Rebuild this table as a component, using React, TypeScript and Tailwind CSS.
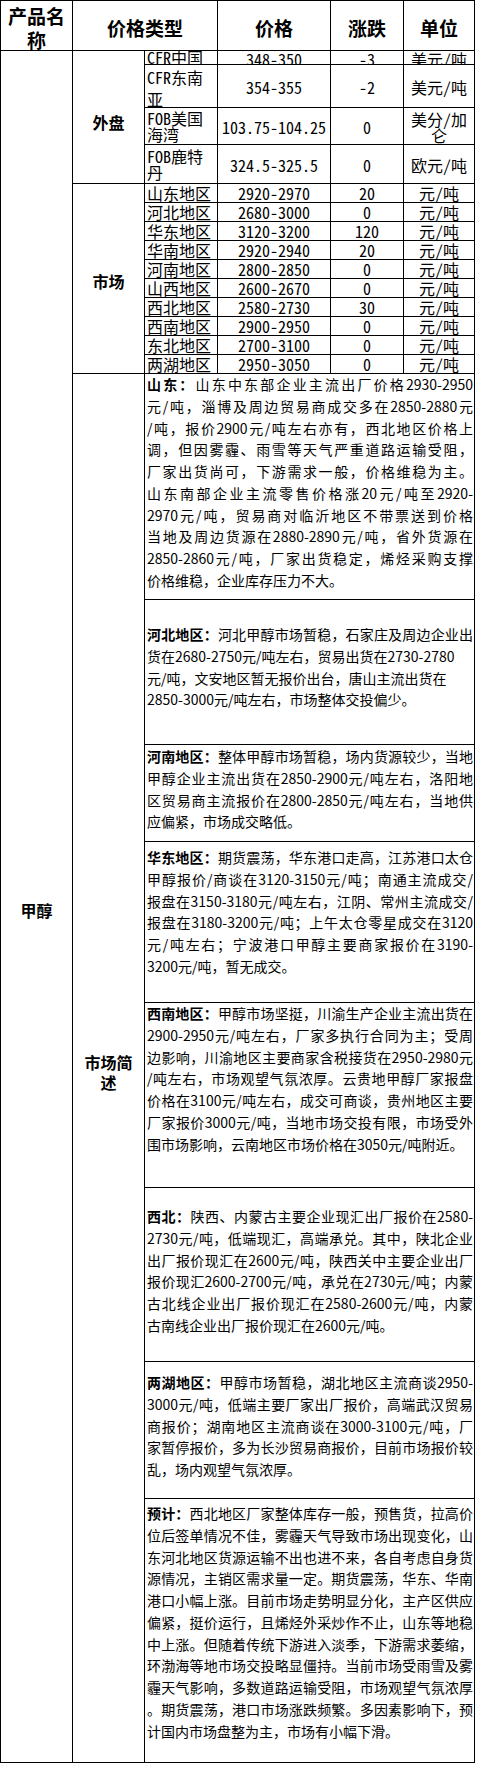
import React from 'react'

const cellFont = "font-['Noto_Sans_Mono_CJK_SC','Noto_Sans_CJK_SC',sans-serif]"

type OuterRow = { name: string[]; price: string; change: string; unit: string[]; pad: string }

const outerRows: OuterRow[] = [
  { name: ['CFR中国'], price: '348-350', change: '-3', unit: ['美元/吨'], pad: 'leading-[13px]' },
  { name: ['CFR东南', '亚'], price: '354-355', change: '-2', unit: ['美元/吨'], pad: 'pt-[4px] leading-[16px] justify-between' },
  { name: ['FOB美国', '海湾'], price: '103.75-104.25', change: '0', unit: ['美分/加', '仑'], pad: 'pt-[2px] leading-[16px]' },
  { name: ['FOB鹿特', '丹'], price: '324.5-325.5', change: '0', unit: ['欧元/吨'], pad: 'pt-[3px] leading-[16px]' },
]

const marketRows = [
  ['山东地区', '2920-2970', '20'],
  ['河北地区', '2680-3000', '0'],
  ['华东地区', '3120-3200', '120'],
  ['华南地区', '2920-2940', '20'],
  ['河南地区', '2800-2850', '0'],
  ['山西地区', '2600-2670', '0'],
  ['西北地区', '2580-2730', '30'],
  ['西南地区', '2900-2950', '0'],
  ['东北地区', '2700-3100', '0'],
  ['两湖地区', '2950-3050', '0'],
]

type Note = { label: string; lines: string[]; loose?: number[]; pt: string }

const notes: Note[] = [
  {
    label: '山东：',
    pt: 'pt-0',
    lines: [
      '山东中东部企业主流出厂价格2930-2950',
      '元/吨，淄博及周边贸易商成交多在2850-2880元',
      '/吨，报价2900元/吨左右亦有，西北地区价格上',
      '调，但因雾霾、雨雪等天气严重道路运输受阻，',
      '厂家出货尚可，下游需求一般，价格维稳为主。',
      '山东南部企业主流零售价格涨20元/吨至2920-',
      '2970元/吨，贸易商对临沂地区不带票送到价格',
      '当地及周边货源在2880-2890元/吨，省外货源在',
      '2850-2860元/吨，厂家出货稳定，烯烃采购支撑',
      '价格维稳，企业库存压力不大。',
    ],
  },
  {
    label: '河北地区：',
    pt: 'pt-[24px]',
    loose: [1, 2],
    lines: [
      '河北甲醇市场暂稳，石家庄及周边企业出',
      '货在2680-2750元/吨左右，贸易出货在2730-2780',
      '元/吨，文安地区暂无报价出台，唐山主流出货在',
      '2850-3000元/吨左右，市场整体交投偏少。',
    ],
  },
  {
    label: '河南地区：',
    pt: 'pt-[1px]',
    lines: [
      '整体甲醇市场暂稳，场内货源较少，当地',
      '甲醇企业主流出货在2850-2900元/吨左右，洛阳地',
      '区贸易商主流报价在2800-2850元/吨左右，当地供',
      '应偏紧，市场成交略低。',
    ],
  },
  {
    label: '华东地区：',
    pt: 'pt-[5px]',
    lines: [
      '期货震荡，华东港口走高，江苏港口太仓',
      '甲醇报价/商谈在3120-3150元/吨；南通主流成交/',
      '报盘在3150-3180元/吨左右，江阴、常州主流成交/',
      '报盘在3180-3200元/吨；上午太仓零星成交在3120',
      '元/吨左右；宁波港口甲醇主要商家报价在3190-',
      '3200元/吨，暂无成交。',
    ],
  },
  {
    label: '西南地区：',
    pt: 'pt-0',
    lines: [
      '甲醇市场坚挺，川渝生产企业主流出货在',
      '2900-2950元/吨左右，厂家多执行合同为主；受周',
      '边影响，川渝地区主要商家含税接货在2950-2980元',
      '/吨左右，市场观望气氛浓厚。云贵地甲醇厂家报盘',
      '价格在3100元/吨左右，成交可商谈，贵州地区主要',
      '厂家报价3000元/吨，当地市场交投有限，市场受外',
      '围市场影响，云南地区市场价格在3050元/吨附近。',
    ],
  },
  {
    label: '西北：',
    pt: 'pt-[18px]',
    lines: [
      '陕西、内蒙古主要企业现汇出厂报价在2580-',
      '2730元/吨，低端现汇，高端承兑。其中，陕北企业',
      '出厂报价现汇在2600元/吨，陕西关中主要企业出厂',
      '报价现汇2600-2700元/吨，承兑在2730元/吨；内蒙',
      '古北线企业出厂报价现汇在2580-2600元/吨，内蒙',
      '古南线企业出厂报价现汇在2600元/吨。',
    ],
  },
  {
    label: '两湖地区：',
    pt: 'pt-[10px]',
    lines: [
      '甲醇市场暂稳，湖北地区主流商谈2950-',
      '3000元/吨，低端主要厂家出厂报价，高端武汉贸易',
      '商报价；湖南地区主流商谈在3000-3100元/吨，厂',
      '家暂停报价，多为长沙贸易商报价，目前市场报价较',
      '乱，场内观望气氛浓厚。',
    ],
  },
  {
    label: '预计：',
    pt: 'pt-[4px]',
    lines: [
      '西北地区厂家整体库存一般，预售货，拉高价',
      '位后签单情况不佳，雾霾天气导致市场出现变化，山',
      '东河北地区货源运输不出也进不来，各自考虑自身货',
      '源情况，主销区需求量一定。期货震荡，华东、华南',
      '港口小幅上涨。目前市场走势明显分化，主产区供应',
      '偏紧，挺价运行，且烯烃外采炒作不止，山东等地稳',
      '中上涨。但随着传统下游进入淡季，下游需求萎缩，',
      '环渤海等地市场交投略显僵持。当前市场受雨雪及雾',
      '霾天气影响，多数道路运输受阻，市场观望气氛浓厚',
      '。期货震荡，港口市场涨跌频繁。多因素影响下，预',
      '计国内市场盘整为主，市场有小幅下滑。',
    ],
  },
]

function NoteCell({ note }: { note: Note }) {
  const last = note.lines.length - 1
  return (
    <div className={`col-span-4 overflow-hidden bg-white pl-[2px] pr-[1px] font-['Noto_Sans_CJK_SC',sans-serif] text-[14px] leading-[21.75px] text-black ${note.pt}`}>
      {note.lines.map((line, i) => {
        const justify = i !== last && !(note.loose ?? []).includes(i)
        return (
          <div key={i} className={`whitespace-nowrap ${justify ? 'text-justify [text-align-last:justify]' : 'text-left'}`}>
            {i === 0 && <span className="font-bold">{note.label}</span>}
            {line}
          </div>
        )
      })}
    </div>
  )
}

export default function App() {
  return (
    <div className="min-h-screen bg-white">
      <div className={`grid w-[475px] grid-cols-[71px_71px_72px_112px_72px_70px] grid-rows-[49px_13px_42px_36px_38px_repeat(10,18px)_225px_144px_96px_160px_184px_173px_136px_263px] gap-px bg-black p-px text-black ${cellFont}`}>
        {/* header */}
        <div className="flex items-center justify-center bg-white pt-[5px] text-center text-[19px] font-bold leading-[24px]">
          产品名<br />称
        </div>
        <div className="col-span-2 flex items-center justify-center bg-white pt-[5px] text-[19px] font-bold">价格类型</div>
        <div className="flex items-center justify-center bg-white pt-[5px] text-[19px] font-bold">价格</div>
        <div className="flex items-center justify-center bg-white pt-[5px] text-[19px] font-bold">涨跌</div>
        <div className="flex items-center justify-center bg-white pt-[5px] text-[19px] font-bold">单位</div>

        {/* spanning labels */}
        <div className="col-[1] row-[2/24] flex items-center justify-center bg-white pt-[6px] text-[16px] font-bold">甲醇</div>
        <div className="col-[2] row-[2/6] flex items-center justify-center bg-white pt-[10px] text-[16px] font-bold">外盘</div>
        <div className="col-[2] row-[6/16] flex items-center justify-center bg-white pt-[5px] text-[16px] font-bold">市场</div>
        <div className="col-[2] row-[16/24] flex items-center justify-center bg-white pt-[7px] text-center text-[16px] font-bold leading-[20px]">
          市场简<br />述
        </div>

        {/* outer market */}
        {outerRows.map((r) => (
          <React.Fragment key={r.price}>
            <div className={`flex flex-col overflow-hidden bg-white pl-[2px] text-[16px] ${r.pad}`}>
              {r.name.map((n) => <span key={n}>{n}</span>)}
            </div>
            <div className="flex items-center justify-center overflow-hidden bg-white pt-[2px] text-[16px] leading-[16px]">{r.price}</div>
            <div className="flex items-center justify-center overflow-hidden bg-white pt-[2px] text-[16px] leading-[16px]">{r.change}</div>
            <div className="flex flex-col items-center justify-center overflow-hidden bg-white pt-[2px] text-[16px] leading-[16px]">
              {r.unit.map((u) => <span key={u}>{u}</span>)}
            </div>
          </React.Fragment>
        ))}

        {/* domestic market */}
        {marketRows.map(([name, price, change]) => (
          <React.Fragment key={name}>
            <div className="overflow-hidden bg-white pl-[2px] text-[16px] leading-[18px]">{name}</div>
            <div className="overflow-hidden bg-white text-center text-[16px] leading-[18px]">{price}</div>
            <div className="overflow-hidden bg-white text-center text-[16px] leading-[18px]">{change}</div>
            <div className="overflow-hidden bg-white text-center text-[16px] leading-[18px]">元/吨</div>
          </React.Fragment>
        ))}

        {/* notes */}
        {notes.map((n) => <NoteCell key={n.label} note={n} />)}
      </div>
    </div>
  )
}
